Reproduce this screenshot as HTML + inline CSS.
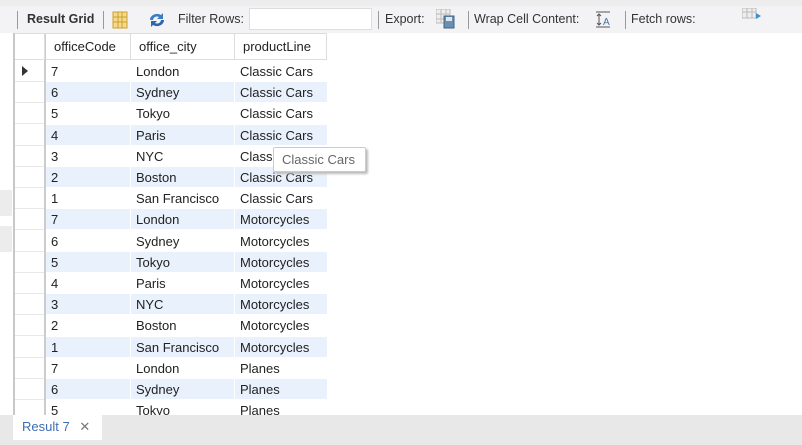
<!DOCTYPE html>
<html><head><style>
*{margin:0;padding:0;box-sizing:border-box}
body{width:802px;height:445px;overflow:hidden;background:#fff;font-family:"Liberation Sans",sans-serif;font-size:13px;color:#222;position:relative}
.abs{position:absolute}
.tb{left:0;top:0;width:802px;height:33px;background:#f3f3f5;border-top:6px solid #ededed}
.sep{width:1px;height:18px;background:#999;top:11px}
.t{top:12px;font-size:12.5px;color:#333;white-space:nowrap}
.cell{position:absolute;height:20px;line-height:21px;padding-left:5px;white-space:nowrap}
.hdr{position:absolute;top:34px;height:26px;line-height:26px;padding-left:8px;border-right:1px solid #ddd;border-bottom:1px solid #ddd}
</style></head><body>
<div class="abs tb"></div>
<div class="abs sep" style="left:17px"></div>
<div class="abs t" style="left:27px;font-weight:bold">Result Grid</div>
<div class="abs sep" style="left:103px"></div>
<svg class="abs" style="left:112px;top:11px" width="16" height="18"><rect x="1" y="1" width="14" height="16" fill="#f6d98a" stroke="#c8a030"/><path d="M6 1v16M10 1v16M1 6h14M1 11h14" stroke="#c8a030"/></svg>
<svg class="abs" style="left:147px;top:11px" width="20" height="18"><path d="M3 9a7 6 0 0 1 11-5l2-2v6h-6l2-2a4 4 0 0 0-6 3z" fill="#3b7dc4"/><path d="M17 9a7 6 0 0 1-11 5l-2 2v-6h6l-2 2a4 4 0 0 0 6-3z" fill="#2a68b0"/></svg>
<div class="abs t" style="left:178px">Filter Rows:</div>
<div class="abs" style="left:249px;top:8px;width:123px;height:22px;background:#fff;border:1px solid #ddd"></div>
<div class="abs sep" style="left:378px"></div>
<div class="abs t" style="left:385px">Export:</div>
<svg class="abs" style="left:436px;top:9px" width="24" height="22"><rect x="0" y="0" width="14" height="14" fill="#eee" stroke="#bbb"/><path d="M5 0v14M10 0v14M0 5h14M0 10h14" stroke="#bbb"/><rect x="8" y="7" width="10" height="12" fill="#6a8fb0" stroke="#3d6585"/><rect x="10" y="8" width="6" height="4" fill="#dfe8f0"/></svg>
<div class="abs sep" style="left:468px"></div>
<div class="abs t" style="left:474px">Wrap Cell Content:</div>
<svg class="abs" style="left:595px;top:11px" width="16" height="18"><path d="M1 1h14M1 16h14M4 3v11M2 5l2-2 2 2M2 12l2 2 2-2" stroke="#555" fill="none"/><text x="8" y="14" font-size="10" fill="#4a6fa0" font-family="Liberation Sans">A</text></svg>
<div class="abs sep" style="left:625px"></div>
<div class="abs t" style="left:631px">Fetch rows:</div>
<svg class="abs" style="left:742px;top:8px" width="22" height="16"><rect x="0" y="0" width="14" height="10" fill="#eee" stroke="#bbb"/><path d="M5 0v10M10 0v10M0 4h14" stroke="#bbb"/><path d="M14 5l5 3-5 3z" fill="#3b8ed0"/></svg>

<div class="abs" style="left:13px;top:33px;width:2px;height:382px;background:#c8c8c8"></div>
<div class="abs" style="left:44px;top:33px;width:2px;height:382px;background:#ccc"></div>
<div class="abs" style="left:15px;top:33px;width:312px;height:1px;background:#ddd"></div>
<div class="hdr" style="left:15px;width:30px;padding:0"></div>
<div class="hdr" style="left:46px;width:85px">officeCode</div>
<div class="hdr" style="left:131px;width:104px">office_city</div>
<div class="hdr" style="left:235px;width:92px">productLine</div>
<div id="rows"></div>
<script>
var d=[[7,"London","Classic Cars"],[6,"Sydney","Classic Cars"],[5,"Tokyo","Classic Cars"],[4,"Paris","Classic Cars"],[3,"NYC","Classic Cars"],[2,"Boston","Classic Cars"],[1,"San Francisco","Classic Cars"],[7,"London","Motorcycles"],[6,"Sydney","Motorcycles"],[5,"Tokyo","Motorcycles"],[4,"Paris","Motorcycles"],[3,"NYC","Motorcycles"],[2,"Boston","Motorcycles"],[1,"San Francisco","Motorcycles"],[7,"London","Planes"],[6,"Sydney","Planes"],[5,"Tokyo","Planes"]];
var h="";
d.forEach(function(r,i){var t=61+i*21.2;var bg=i%2?"#e9f1fc":"#fff";
h+='<div class="abs" style="left:15px;top:'+(t+20)+'px;width:29px;height:1px;background:#e8e8e8"></div>';
if(i==0)h+='<div class="abs" style="left:22px;top:'+(t+5)+'px;width:0;height:0;border-left:6px solid #333;border-top:5px solid transparent;border-bottom:5px solid transparent"></div>';
h+='<div class="cell" style="left:46px;top:'+t+'px;width:84px;background:'+bg+'">'+r[0]+'</div>';
h+='<div class="cell" style="left:131px;top:'+t+'px;width:103px;background:'+bg+'">'+r[1]+'</div>';
h+='<div class="cell" style="left:235px;top:'+t+'px;width:92px;background:'+bg+'">'+r[2]+'</div>';});
document.getElementById("rows").innerHTML=h;
</script>
<div class="abs" style="left:273px;top:147px;width:93px;height:25px;background:#fff;border:1px solid #ccc;border-radius:2px;box-shadow:2px 2px 2px #bbb;color:#666;font-size:13px;line-height:23px;padding-left:8px">Classic Cars</div>
<div class="abs" style="left:0;top:190px;width:12px;height:26px;background:#ececec"></div>
<div class="abs" style="left:0;top:226px;width:12px;height:26px;background:#ececec"></div>
<div class="abs" style="left:0;top:415px;width:802px;height:30px;background:#e8e8e8"></div>
<div class="abs" style="left:13px;top:415px;width:89px;height:25px;background:#fff;color:#3d6fb5;font-size:13px;line-height:24px;padding-left:9px">Result 7 <span style="color:#777;margin-left:6px">✕</span></div>
</body></html>
